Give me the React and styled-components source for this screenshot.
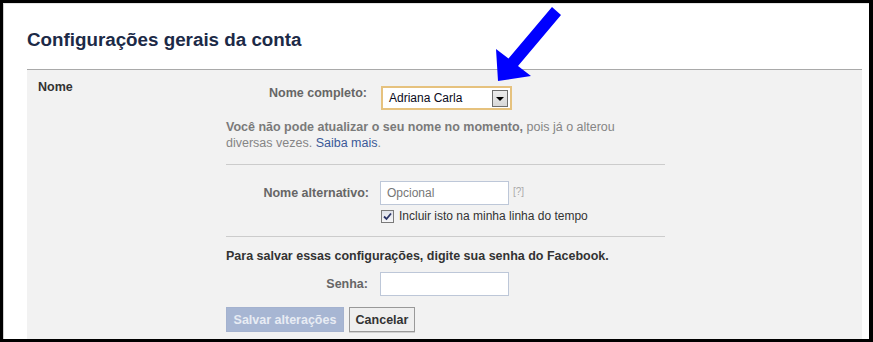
import React from 'react';
import styled, { createGlobalStyle } from 'styled-components';

const GlobalStyle = createGlobalStyle`
  body {
    margin: 0;
    background: #000;
    font-family: "Liberation Sans", Arial, sans-serif;
  }
`;

const Frame = styled.div`
  position: relative;
  width: 873px;
  height: 342px;
  box-sizing: border-box;
  background: #000;
  padding: 3px 4px 3px 3px;
`;

const Window = styled.div`
  height: 100%;
  box-sizing: border-box;
  background: #fff;
  border-top: 1px solid #e4e4e4;
  border-left: 1px solid #d0d0d0;
  padding: 0 7px 0 23px;
  display: flex;
  flex-direction: column;
`;

const Header = styled.div`
  padding: 25px 0 18px 0;
  border-bottom: 1px solid #a9a9a9;
`;

const Title = styled.h2`
  margin: 0;
  font-size: 18.8px;
  line-height: 22px;
  font-weight: bold;
  color: #1c2a47;
`;

const Panel = styled.div`
  flex: 1;
  background: #f2f2f2;
  display: grid;
  grid-template-columns: 188px 439px;
  padding: 10px 0 0 11px;
`;

const SectionName = styled.div`
  font-size: 12.5px;
  line-height: 15px;
  font-weight: bold;
  color: #333;
`;

const FormCol = styled.div`
  display: flex;
  flex-direction: column;
  padding-top: 6px;
`;

const Row = styled.div`
  display: flex;
  align-items: ${(p) => (p.top ? 'flex-start' : 'center')};
  margin-top: ${(p) => p.mt || 0}px;
`;

const Label = styled.label`
  width: 154px;
  flex: none;
  text-align: right;
  padding-right: ${(p) => p.pr || 12}px;
  box-sizing: border-box;
  padding-top: ${(p) => p.pt || 0}px;
  font-size: 12.5px;
  line-height: 15px;
  font-weight: bold;
  color: #666;
`;

const Select = styled.div`
  width: 131px;
  height: 24px;
  box-sizing: border-box;
  border: 2px solid #e6c27e;
  background: #fff;
  display: flex;
  align-items: center;
  justify-content: space-between;
  padding: 0 2px 0 6px;
  font-size: 12px;
  color: #0a0a1a;
  margin-left: 1px;
`;

const DropBtn = styled.span`
  width: 16px;
  height: 17px;
  box-sizing: border-box;
  border: 1px solid #6d6d6d;
  background: linear-gradient(#ececec, #d8d8d8);
  display: flex;
  align-items: center;
  justify-content: center;
  &::after {
    content: '';
    border-left: 4px solid transparent;
    border-right: 4px solid transparent;
    border-top: 4px solid #000;
    margin-top: 1px;
  }
`;

const Notice = styled.p`
  margin: 9px 0 0 0;
  width: 410px;
  font-size: 12.5px;
  line-height: 16px;
  color: #858585;
  b {
    color: #7a7a7a;
  }
  a {
    color: #3b5998;
    text-decoration: none;
  }
`;

const Divider = styled.div`
  height: 1px;
  background: #cccccc;
  margin-top: ${(p) => p.mt || 0}px;
`;

const TextInput = styled.div`
  width: 129px;
  height: 24px;
  box-sizing: border-box;
  border: 1px solid #bdc7d8;
  background: #fff;
  padding: 0 6px;
  display: flex;
  align-items: center;
  font-size: 12px;
  color: #777;
`;

const Help = styled.span`
  margin-left: 4px;
  font-size: 10px;
  color: #aaa;
  margin-top: -3px;
`;

const CheckRow = styled.div`
  display: flex;
  align-items: center;
  margin: 4px 0 0 154px;
  padding-left: 1px;
  font-size: 12px;
  line-height: 14px;
  color: #333;
`;

const Check = styled.span`
  width: 13px;
  height: 13px;
  box-sizing: border-box;
  border: 1px solid #7a7a7a;
  background: linear-gradient(#dfe2ea, #f6f6f8);
  display: flex;
  align-items: center;
  justify-content: center;
  margin-right: 5px;
`;

const Prompt = styled.div`
  margin-top: 11px;
  font-size: 12.5px;
  line-height: 16px;
  font-weight: bold;
  color: #333;
`;

const Buttons = styled.div`
  display: flex;
  gap: 5px;
  margin-top: 11px;
`;

const Button = styled.button`
  height: 25px;
  box-sizing: border-box;
  padding: 0 5px;
  font-family: "Liberation Sans", Arial, sans-serif;
  font-size: 12.5px;
  font-weight: bold;
  border: 1px solid ${(p) => (p.primary ? '#a4b2cf' : '#999')};
  background: ${(p) => (p.primary ? '#a7b6d3' : '#efefef')};
  color: ${(p) => (p.primary ? '#e8ecf4' : '#333')};
  box-shadow: ${(p) => (p.primary ? 'none' : '0 1px 0 #d0d0d0')};
  width: ${(p) => p.w}px;
`;

const Arrow = styled.svg`
  position: absolute;
  left: 0;
  top: 0;
  pointer-events: none;
`;

export default function App() {
  return (
    <>
      <GlobalStyle />
      <Frame>
        <Window>
          <Header>
            <Title>Configurações gerais da conta</Title>
          </Header>
          <Panel>
            <SectionName>Nome</SectionName>
            <FormCol>
              <Row top>
                <Label pt={0} pr={13}>Nome completo:</Label>
                <Select>
                  Adriana Carla
                  <DropBtn />
                </Select>
              </Row>
              <Notice>
                <b>Você não pode atualizar o seu nome no momento,</b> pois já o alterou diversas vezes.{' '}
                <a href="#">Saiba mais</a>.
              </Notice>
              <Divider mt={13} />
              <Row mt={16}>
                <Label pr={11}>Nome alternativo:</Label>
                <TextInput>Opcional</TextInput>
                <Help>[?]</Help>
              </Row>
              <CheckRow>
                <Check>
                  <svg width="9" height="9" viewBox="0 0 9 9">
                    <path d="M1 4.5 L3.5 7 L8 1.5" fill="none" stroke="#2a3466" strokeWidth="1.8" />
                  </svg>
                </Check>
                Incluir isto na minha linha do tempo
              </CheckRow>
              <Divider mt={13} />
              <Prompt>Para salvar essas configurações, digite sua senha do Facebook.</Prompt>
              <Row mt={8}>
                <Label>Senha:</Label>
                <TextInput />
              </Row>
              <Buttons>
                <Button primary w={118}>Salvar alterações</Button>
                <Button w={66}>Cancelar</Button>
              </Buttons>
            </FormCol>
          </Panel>
        </Window>
        <Arrow width="873" height="342">
          <polygon
            points="552,7 561,15 518,66 531,76 498,81 496,49 508.5,58.6"
            fill="#0000ff"
          />
        </Arrow>
      </Frame>
    </>
  );
}
